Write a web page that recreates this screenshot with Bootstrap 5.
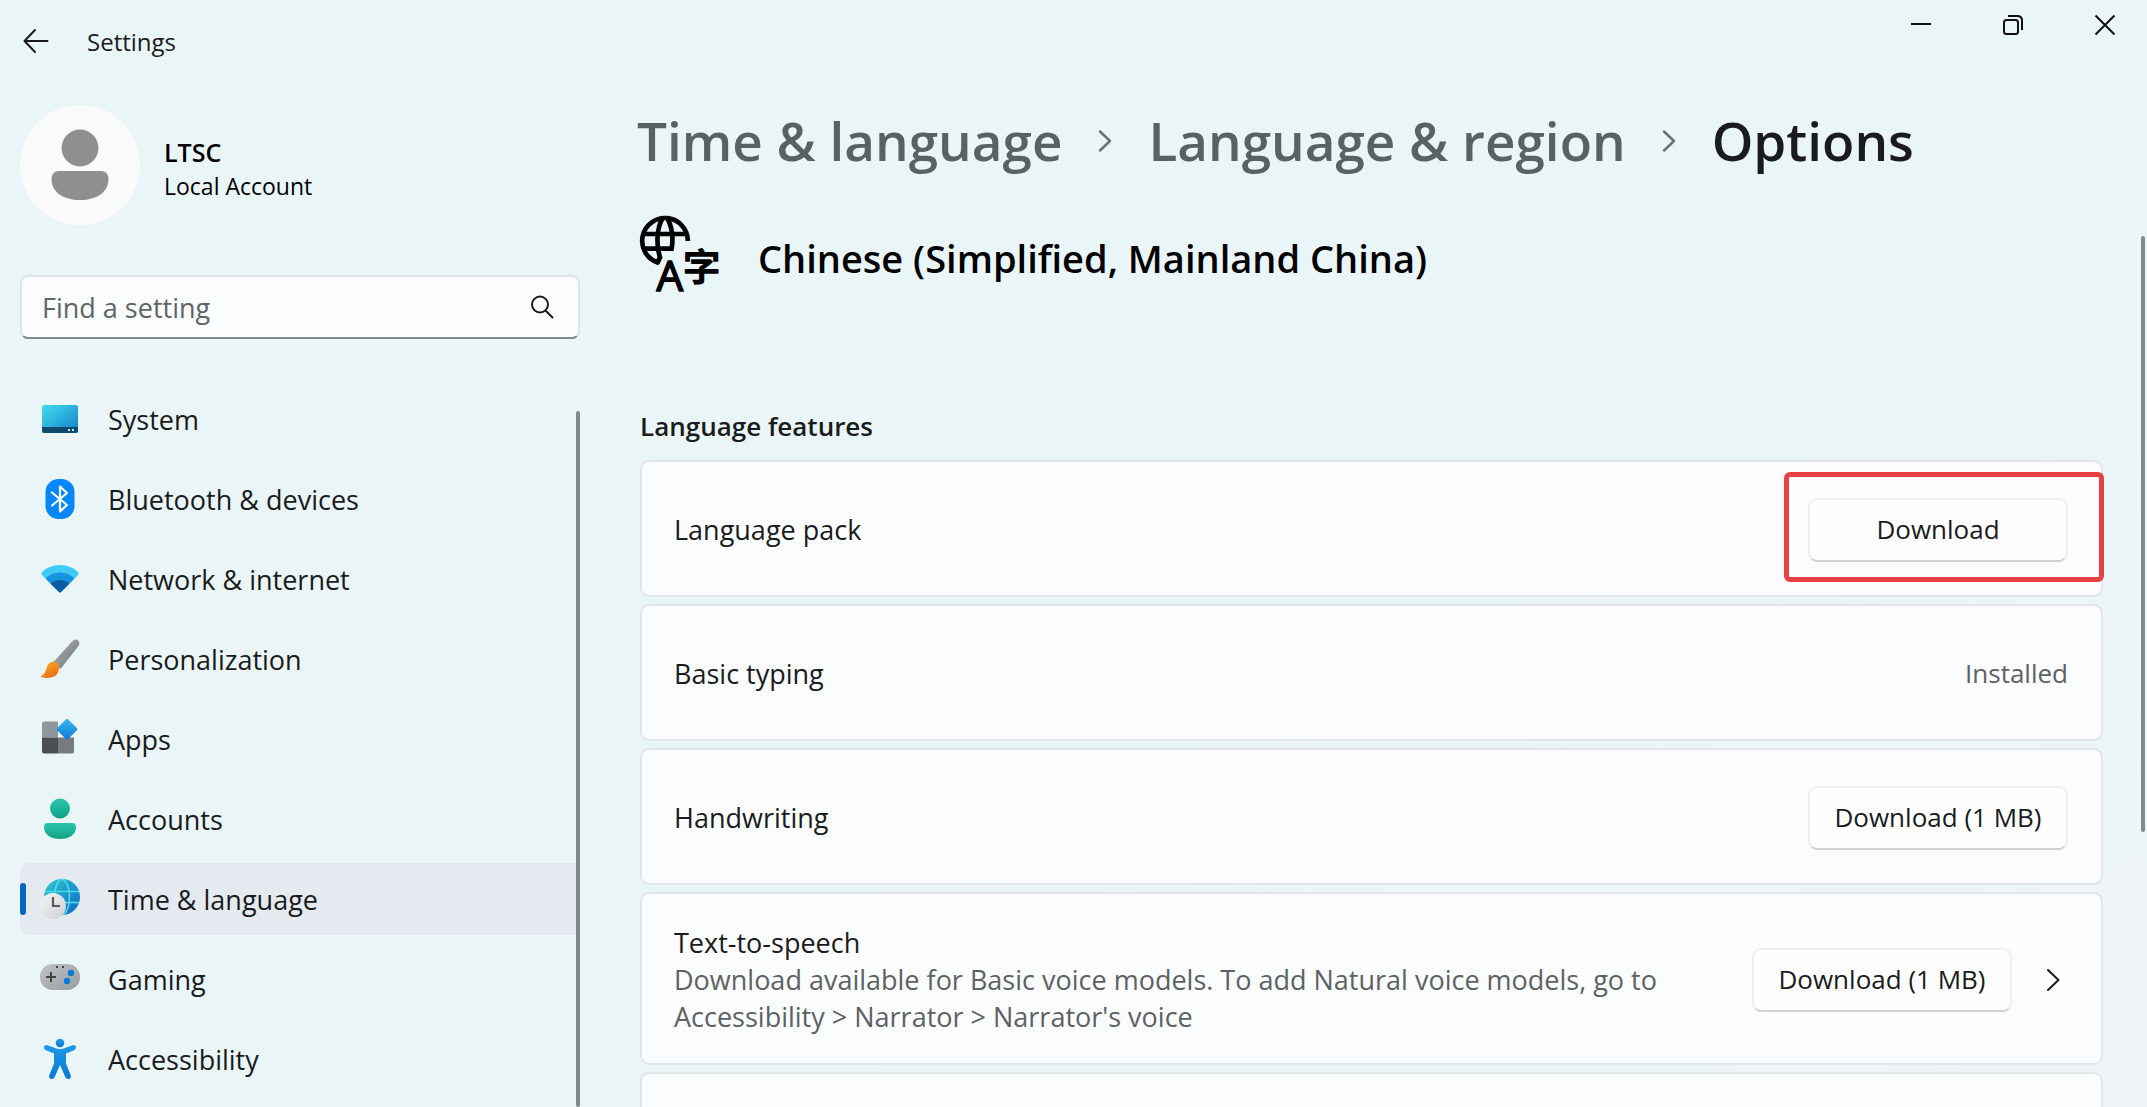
<!DOCTYPE html>
<html lang="en">
<head>
<meta charset="utf-8">
<meta name="viewport" content="width=device-width, initial-scale=1">
<title>Settings</title>
<link rel="stylesheet" href="https://cdn.jsdelivr.net/npm/bootstrap@5.3.0/dist/css/bootstrap.min.css">
<style>
  body {
    font-family: "Open Sans", "Noto Sans", "Noto Sans CJK SC", sans-serif;
    font-size: 27px;
    line-height: 37px;
    color: #1a1b1c;
    background: linear-gradient(155deg, #eaf5f8 0%, #eaf5f7 60%, #edf5f8 80%, #f0f4f9 100%);
  }
  svg { flex: none; display: block; overflow: visible; }
  .app-header { height: 62px; }
  .plain-btn { background: none; border: 0; padding: 0; color: inherit; display: flex; align-items: center; justify-content: center; }
  .back-btn { width: 72px; height: 82px; }
  .app-title { font-size: 24px; line-height: 32px; padding: 26px 0 0 15px; }
  .win-btn { width: 84px; height: 50px; }
  .sidebar { width: 580px; padding: 43px 0 0 20px; }
  .avatar { width: 120px; height: 120px; background: #fafafa; }
  .account { gap: 24px; margin-bottom: 50px; color: #000; }
  .account-text { padding-top: 7px; }
  .account-name { font-size: 25px; line-height: 34px; font-weight: 600; }
  .account-kind { font-size: 23px; line-height: 34px; }
  .search-box { margin-bottom: 44px; }
  .search-box .form-control {
    height: 64px; padding: 0 70px 0 20px; font-size: 27px; border: 2px solid #dce4e7;
    border-bottom-color: #7f8a8d; border-radius: 8px; background: #fbfcfe;
  }
  .search-box .form-control::placeholder { color: #5f6465; opacity: 1; }
  .search-box svg { position: absolute; right: 26px; top: 20px; }
  .side-nav { padding-right: 3px; }
  .side-nav .nav { gap: 8px; }
  .side-nav .nav-link {
    position: relative; height: 72px; padding: 0 0 0 20px; gap: 28px; color: #1a1b1c;
    border-radius: 8px 0 0 8px;
  }
  .side-nav .nav-link.active { background: #e5eaf0; }
  .side-nav .nav-link.active::before {
    content: ""; position: absolute; left: 0; top: 20px; width: 6px; height: 32px;
    border-radius: 3px; background: #0467c0;
  }
  .thumb { position: absolute; border-radius: 3px; background: #80898b; width: 4px; }
  .nav-thumb { right: 0; top: 28px; bottom: 0; }
  .main-thumb { right: 2px; top: 174px; height: 57%; }
  .content { padding: 43px 44px 0 60px; min-width: 0; }
  .crumbs { font-size: 53px; line-height: 72px; font-weight: 600; margin: 0 0 39px -3px; }
  .crumbs a { color: #5a6163; text-decoration: none; }
  .crumbs svg { margin: 0 36px; }
  .lang-row { gap: 38px; margin-bottom: 116px; color: #000; }
  .lang-name { font-size: 38px; line-height: 52px; font-weight: 600; padding-top: 16px; margin: 0; }
  .section-title { font-size: 26px; line-height: 36px; font-weight: 600; margin: 0 0 16px; }
  .feature-list { gap: 7px; }
  .feature {
    min-height: 137px; padding: 30px 33px 28px 32px; border: 2px solid #e0e7eb; border-radius: 9px;
    background: #fbfcfe; background-clip: padding-box;
  }
  .muted-text { color: #5e6163; }
  .state-text { font-size: 26px; }
  .btn-soft {
    --bs-btn-font-size: 26px; --bs-btn-line-height: 37px; --bs-btn-padding-x: 10px; --bs-btn-padding-y: 0;
    --bs-btn-color: #1a1b1c; --bs-btn-bg: #fefefe; --bs-btn-hover-bg: #f8f9fa; --bs-btn-hover-color: #1a1b1c;
    width: 260px; height: 64px; border: 2px solid #eeeff0; border-bottom-color: #cfd1d2; border-radius: 9px;
  }
  .expand-btn { width: 30px; height: 64px; margin-left: 26px; }
  .callout { position: absolute; z-index: 2; top: 10px; right: -3px; width: 320px; height: 110px; border: 5px solid #e84143; border-radius: 6px; pointer-events: none; }
</style>
<script src="https://cdn.jsdelivr.net/npm/bootstrap@5.3.0/dist/js/bootstrap.bundle.min.js"></script>
</head>
<body class="vh-100 overflow-hidden d-flex flex-column">

<header class="app-header d-flex align-items-start">
  <button class="plain-btn back-btn" type="button" aria-label="Back">
    <svg width="26" height="24" viewBox="0 0 26 24" fill="none" stroke="#1a1b1c" stroke-width="2" stroke-linecap="round" stroke-linejoin="round"><path d="M24.500 12H1.500M12 1L1.500 12L12 23"/></svg>
  </button>
  <div class="app-title">Settings</div>
  <div class="d-flex gap-2 ms-auto">
    <button class="plain-btn win-btn" type="button" aria-label="Minimize">
      <svg width="20" height="20" viewBox="0 0 20 20"><path d="M0 9H20" stroke="#111" stroke-width="2"/></svg>
    </button>
    <button class="plain-btn win-btn" type="button" aria-label="Restore">
      <svg width="20" height="20" viewBox="0 0 20 20" fill="none" stroke="#111" stroke-width="2"><rect x="1" y="5" width="14" height="14" rx="2.500"/><path d="M5 1H14.500Q19 1 19 5.500V15"/></svg>
    </button>
    <button class="plain-btn win-btn" type="button" aria-label="Close">
      <svg width="20" height="20" viewBox="0 0 20 20"><path d="M0.500 0.500L19.500 19.500M19.500 0.500L0.500 19.500" stroke="#111" stroke-width="2"/></svg>
    </button>
  </div>
</header>

<div class="d-flex flex-grow-1 overflow-hidden">
  <aside class="sidebar flex-shrink-0 d-flex flex-column">
    <div class="account d-flex">
      <div class="avatar rounded-circle flex-shrink-0 d-flex align-items-center justify-content-center">
        <svg width="58" height="70" viewBox="0 0 58 70" fill="#8f8f8f"><circle cx="29" cy="18" r="18.500"/><path d="M8 41H50Q57 41 57.500 49C57.500 62 46 70 29 70S0.500 62 0.500 49Q1 41 8 41Z"/></svg>
      </div>
      <div class="account-text align-self-center">
        <div class="account-name">LTSC</div>
        <div class="account-kind">Local Account</div>
      </div>
    </div>

    <form class="search-box position-relative">
      <label class="visually-hidden" for="find">Find a setting</label>
      <input id="find" class="form-control" type="text" placeholder="Find a setting">
      <svg width="24" height="24" viewBox="0 0 24 24" fill="none" stroke="#1a1b1c" stroke-width="2" stroke-linecap="round"><circle cx="10" cy="9.500" r="8"/><path d="M15.500 15.500L22.500 22.500"/></svg>
    </form>

    <nav class="side-nav position-relative flex-grow-1" aria-label="Settings sections">
      <div class="nav flex-column">
        <a class="nav-link d-flex align-items-center" href="#">
          <svg width="40" height="40" viewBox="0 0 40 40"><defs><linearGradient id="gSys" x1="0" y1="0" x2="1" y2="1"><stop offset="0" stop-color="#42dcea"/><stop offset="1" stop-color="#1280cf"/></linearGradient></defs><rect x="2" y="6" width="36" height="28" rx="2.500" fill="url(#gSys)"/><path d="M2 28H38V31.500Q38 34 35.500 34H4.500Q2 34 2 31.500Z" fill="#0d4a6e"/><path d="M28 30h2v2h-2zM32 30h2v2h-2z" fill="#c6e6f2"/></svg>
          <span>System</span></a>
        <a class="nav-link d-flex align-items-center" href="#">
          <svg width="40" height="40" viewBox="0 0 40 40"><rect x="5.500" y="0" width="29" height="40" rx="13" fill="#0486fc"/><path d="M12 13.500L27 26L20 32.500V7.500L27 14L12 26.500" fill="none" stroke="#fff" stroke-width="2.200" stroke-linecap="round" stroke-linejoin="round"/></svg>
          <span>Bluetooth &amp; devices</span></a>
        <a class="nav-link d-flex align-items-center" href="#">
          <svg width="40" height="40" viewBox="0 0 40 40"><defs><clipPath id="cNet"><path d="M2.200 16.200Q0.500 14.500 2.400 12.700Q9.500 6 20 6T37.600 12.700Q39.500 14.500 37.800 16.200L21.200 32.800Q20 34 18.800 32.800Z"/></clipPath></defs><g clip-path="url(#cNet)"><rect width="40" height="40" fill="#3fcbf3"/><circle cx="20" cy="34" r="20.500" fill="#1593dc"/><circle cx="20" cy="34" r="13" fill="#0b5aa4"/></g></svg>
          <span>Network &amp; internet</span></a>
        <a class="nav-link d-flex align-items-center" href="#">
          <svg width="40" height="40" viewBox="0 0 40 40"><defs><linearGradient id="gBr" x1="0" y1="0" x2="1" y2="1"><stop offset=".2" stop-color="#a4a8ab"/><stop offset="1" stop-color="#686e73"/></linearGradient><linearGradient id="gTip" x1="0" y1="0" x2=".6" y2="1"><stop offset="0" stop-color="#fdb02c"/><stop offset="1" stop-color="#ee6f14"/></linearGradient></defs><path d="M13.500 23L32 2.500Q35 -0.500 38 1.200Q40.500 3.500 38.500 7L20.500 30Z" fill="url(#gBr)"/><path d="M1 37Q5 35.500 6 30.500Q8 22.500 14 22.500Q19.500 24 19 30Q18 37.500 11 38.500Q5 39.500 1.500 38.200Q0.600 37.500 1 37Z" fill="url(#gTip)"/></svg>
          <span>Personalization</span></a>
        <a class="nav-link d-flex align-items-center" href="#">
          <svg width="40" height="40" viewBox="0 0 40 40"><defs><linearGradient id="gApp" x1="0" y1="0" x2="1" y2="1"><stop offset="0" stop-color="#3fb9f2"/><stop offset="1" stop-color="#0b78d4"/></linearGradient></defs><path d="M4 2.500H18V18.500H2V4.500Q2 2.500 4 2.500Z" fill="#8f969c"/><path d="M2 18.500H18V34.500H4Q2 34.500 2 32.500Z" fill="#4a4f54"/><path d="M18 18.500H34V32.500Q34 34.500 32 34.500H18Z" fill="#767c82"/><rect x="19.300" y="2.300" width="15.500" height="15.500" rx="1.500" transform="rotate(45 27 10)" fill="url(#gApp)"/></svg>
          <span>Apps</span></a>
        <a class="nav-link d-flex align-items-center" href="#">
          <svg width="40" height="40" viewBox="0 0 40 40"><defs><linearGradient id="gAcc" x1="0" y1="0" x2="0" y2="1"><stop offset="0" stop-color="#2ac4b0"/><stop offset="1" stop-color="#10a384"/></linearGradient></defs><circle cx="20" cy="9.500" r="10" fill="url(#gAcc)"/><path d="M8 24H32Q36 24 36 28C36 36 29 40 20 40S4 36 4 28Q4 24 8 24Z" fill="url(#gAcc)"/></svg>
          <span>Accounts</span></a>
        <a class="nav-link active d-flex align-items-center" href="#" aria-current="page">
          <svg width="40" height="40" viewBox="0 0 40 40"><defs><linearGradient id="gGl" x1="0" y1="0" x2="1" y2="1"><stop offset="0" stop-color="#33c9d4"/><stop offset="1" stop-color="#0968c4"/></linearGradient><linearGradient id="gCl" x1="0" y1="0" x2="1" y2="1"><stop offset="0" stop-color="#f6f6f6"/><stop offset="1" stop-color="#cdcfd1"/></linearGradient></defs><circle cx="22" cy="18" r="18" fill="url(#gGl)"/><g fill="none" stroke="#4fdcea" stroke-width="1.500"><path d="M5 12.500H39M5 23.500H39"/><ellipse cx="22" cy="18" rx="7.500" ry="17.500"/></g><circle cx="13" cy="27" r="13" fill="url(#gCl)"/><path d="M13 18V27H20" fill="none" stroke="#565a5d" stroke-width="2.200"/></svg>
          <span>Time &amp; language</span></a>
        <a class="nav-link d-flex align-items-center" href="#">
          <svg width="40" height="40" viewBox="0 0 40 40"><defs><linearGradient id="gGm" x1="0" y1="0" x2="1" y2="1"><stop offset="0" stop-color="#bfc3c6"/><stop offset="1" stop-color="#979ca0"/></linearGradient></defs><rect y="5" width="40" height="26" rx="12.500" fill="url(#gGm)"/><path d="M6 18H16M11 13V23" stroke="#3f4447" stroke-width="2"/><path d="M16 7h2v2h-2zM22 7h2v2h-2z" fill="#3f4447"/><circle cx="31" cy="14" r="3.200" fill="#0c78d6"/><circle cx="27" cy="22" r="3.200" fill="#0c78d6"/></svg>
          <span>Gaming</span></a>
        <a class="nav-link d-flex align-items-center" href="#">
          <svg width="40" height="40" viewBox="0 0 40 40"><defs><linearGradient id="gAx" x1="0" y1="0" x2="0" y2="1"><stop offset="0" stop-color="#1c9be8"/><stop offset="1" stop-color="#0878d2"/></linearGradient></defs><g fill="url(#gAx)"><circle cx="20" cy="4" r="4.300"/><path d="M7.500 6.200L16.500 9.600Q20 10.600 23.500 9.600L32.500 6.200Q35.500 5.500 36 8.300Q36.200 10.400 34 11.200L26 14.500V24.500L30.800 36.500Q31.300 39.300 28.800 40Q26.300 40.300 25.300 38L20 26L14.700 38Q13.700 40.300 11.200 40Q8.700 39.300 9.200 36.500L14 24.500V14.500L6 11.200Q3.800 10.400 4 8.300Q4.500 5.500 7.500 6.200Z"/></g></svg>
          <span>Accessibility</span></a>
      </div>
      <div class="thumb nav-thumb"></div>
    </nav>
  </aside>

  <main class="content flex-grow-1 position-relative">
    <nav class="crumbs d-flex align-items-center text-nowrap" aria-label="Breadcrumb">
      <a href="#">Time &amp; language</a>
      <svg width="14" height="22" viewBox="0 0 14 22" fill="none" stroke="#697173" stroke-width="2.500" stroke-linecap="round" stroke-linejoin="round"><path d="M2 1.500L12 11L2 20.500"/></svg>
      <a href="#">Language &amp; region</a>
      <svg width="14" height="22" viewBox="0 0 14 22" fill="none" stroke="#697173" stroke-width="2.500" stroke-linecap="round" stroke-linejoin="round"><path d="M2 1.500L12 11L2 20.500"/></svg>
      <span>Options</span>
    </nav>

    <div class="lang-row d-flex align-items-start">
      <svg width="80" height="76" viewBox="30 32 240 228" aria-hidden="true">
        <g fill="none" stroke="#000" stroke-width="14" stroke-linejoin="round">
          <path d="M173.500 107A68.500 68.500 0 1 0 83 171.500L92 152"/>
          <path d="M97 40C80 70 78 120 90 156M113 40C126 66 130 100 125 130"/>
          <path d="M42 86H168M42 130H131"/>
        </g>
        <text x="119" y="256" text-anchor="middle" font-family="Open Sans, sans-serif" font-weight="400" font-size="126" stroke="#000" stroke-width="5" stroke-linejoin="round">A</text>
        <text x="215" y="228" text-anchor="middle" font-family="Noto Sans CJK SC, sans-serif" font-weight="500" font-size="112" stroke="#000" stroke-width="4" stroke-linejoin="round">字</text>
      </svg>
      <h1 class="lang-name">Chinese (Simplified, Mainland China)</h1>
    </div>

    <h2 class="section-title">Language features</h2>
    <div class="feature-list d-flex flex-column">
      <div class="feature d-flex align-items-center position-relative">
        <div class="me-auto">Language pack</div>
        <button class="btn btn-soft flex-shrink-0" type="button">Download</button>
        <div class="callout"></div>
      </div>
      <div class="feature d-flex align-items-center">
        <div class="me-auto">Basic typing</div>
        <div class="muted-text state-text">Installed</div>
      </div>
      <div class="feature d-flex align-items-center">
        <div class="me-auto">Handwriting</div>
        <button class="btn btn-soft flex-shrink-0" type="button">Download (1 MB)</button>
      </div>
      <div class="feature d-flex align-items-center">
        <div class="me-auto">
          <div>Text-to-speech</div>
          <div class="muted-text">Download available for Basic voice models. To add Natural voice models, go to Accessibility &gt; Narrator &gt; Narrator's voice</div>
        </div>
        <button class="btn btn-soft flex-shrink-0" type="button">Download (1 MB)</button>
        <button class="plain-btn expand-btn flex-shrink-0" type="button" aria-label="Open text-to-speech options">
          <svg width="14" height="22" viewBox="0 0 14 22" fill="none" stroke="#1a1b1c" stroke-width="2" stroke-linecap="round" stroke-linejoin="round"><path d="M2 1L12.500 11L2 21"/></svg>
        </button>
      </div>
      <div class="feature"></div>
    </div>
    <div class="thumb main-thumb"></div>
  </main>
</div>
</body>
</html>
